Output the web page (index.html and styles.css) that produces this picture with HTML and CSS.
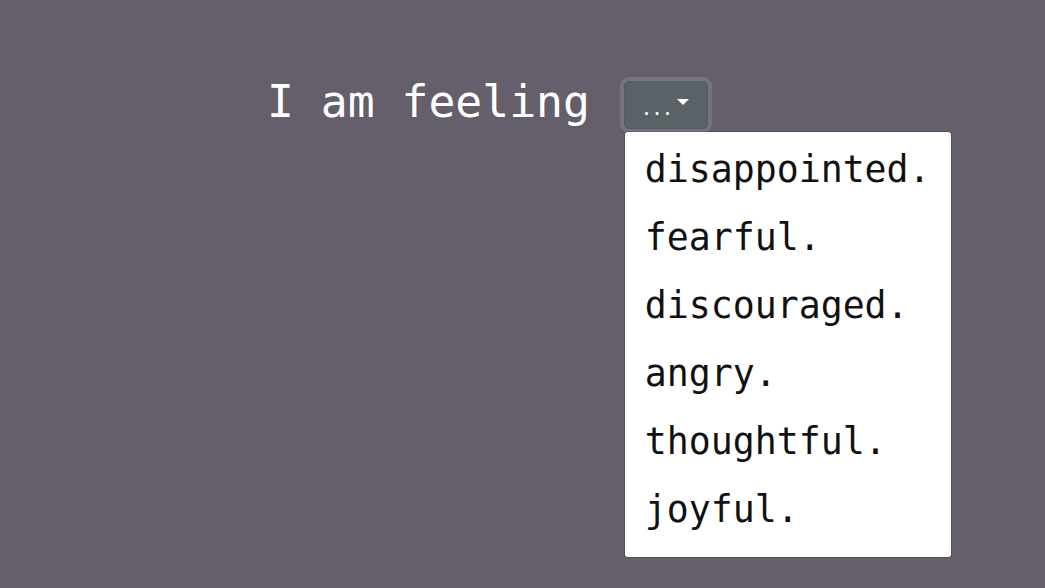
FILE: index.html
```html
<!DOCTYPE html>
<html lang="en">
<head>
<meta charset="utf-8">
<title>I am feeling</title>
<link rel="stylesheet" href="styles.css">
</head>
<body>
<main class="page">
  <div class="feeling">
    <span class="lead">I am feeling</span>
    <div class="dropdown">
      <button class="toggle" type="button"><span class="dots">...</span><span class="caret"></span></button>
      <ul class="menu">
        <li class="item">disappointed.</li>
        <li class="item">fearful.</li>
        <li class="item">discouraged.</li>
        <li class="item">angry.</li>
        <li class="item">thoughtful.</li>
        <li class="item">joyful.</li>
      </ul>
    </div>
  </div>
</main>
</body>
</html>
```

FILE: styles.css
```css
html, body {
  margin: 0;
  height: 100%;
}

body {
  background: #655f6c;
  font-family: "DejaVu Sans Mono", "Liberation Mono", monospace;
}

.page {
  padding: 81px 0 0 267px;
}

.feeling {
  display: flex;
  align-items: flex-start;
  gap: 34px;
}

.lead {
  color: #ffffff;
  font-size: 44.7px;
  line-height: 48px;
  margin-top: -3.5px;
}

.dropdown {
  position: relative;
}

.toggle {
  display: flex;
  align-items: center;
  box-sizing: border-box;
  width: 84px;
  height: 48px;
  padding: 0 16px;
  background: #5a6268;
  border: 1px solid #545b62;
  border-radius: 5px;
  box-shadow: 0 0 0 4px rgba(130, 138, 145, 0.5);
  color: #ffffff;
  font-family: "DejaVu Sans Mono", monospace;
  font-size: 20px;
  cursor: pointer;
}

.dots {
  letter-spacing: -1px;
  line-height: 1;
  padding-top: 6px;
  font-size: 19px;
}

.caret {
  width: 0;
  height: 0;
  margin-left: 5px;
  margin-bottom: 6px;
  border-top: 6px solid #ffffff;
  border-left: 6px solid transparent;
  border-right: 6px solid transparent;
}

.menu {
  position: absolute;
  top: 100%;
  left: 0;
  margin: 2px 0 0;
  padding: 8px 0 9px;
  list-style: none;
  background: #ffffff;
  border: 1px solid rgba(0, 0, 0, 0.15);
  border-radius: 4px;
  background-clip: padding-box;
}

.item {
  padding: 0 20px 8px;
  color: #111111;
  font-size: 36.5px;
  line-height: 60px;
  white-space: nowrap;
}
```
